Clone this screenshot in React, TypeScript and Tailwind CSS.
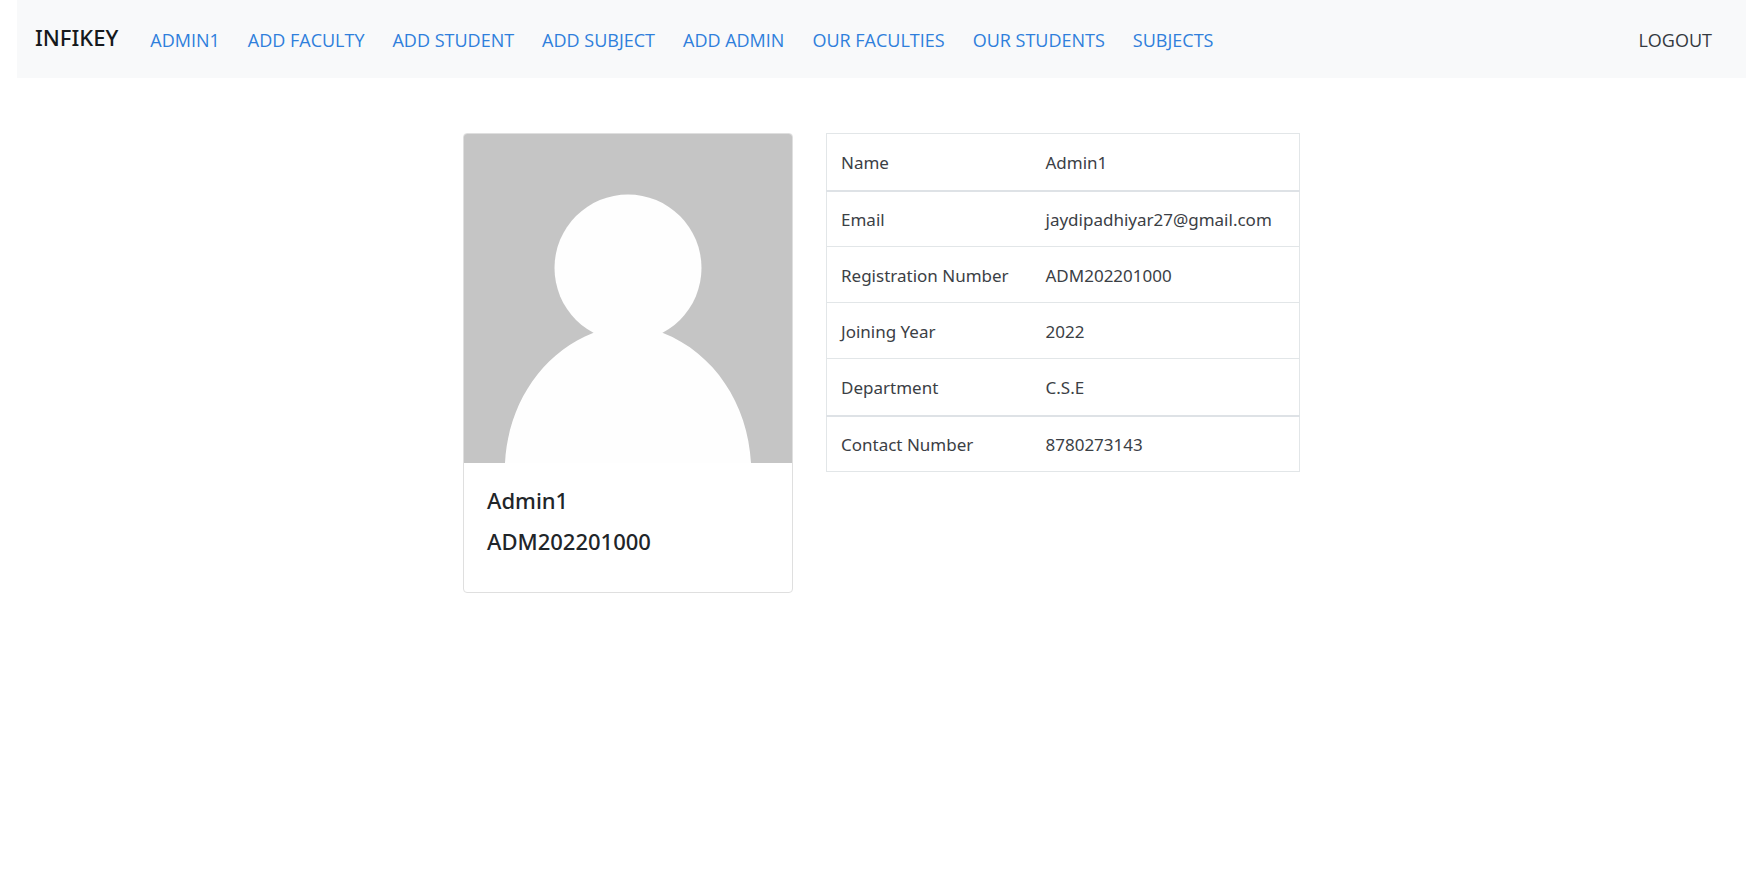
const links = [
  "ADMIN1",
  "ADD FACULTY",
  "ADD STUDENT",
  "ADD SUBJECT",
  "ADD ADMIN",
  "OUR FACULTIES",
  "OUR STUDENTS",
  "SUBJECTS",
];

const heavy = "h-[57px] border-b-2 border-[#dee2e6]";
const light = "h-14 border-b border-[#e2e6e8]";

const details = [
  { label: "Name", value: "Admin1", line: heavy },
  { label: "Email", value: "jaydipadhiyar27@gmail.com", line: light },
  { label: "Registration Number", value: "ADM202201000", line: light },
  { label: "Joining Year", value: "2022", line: light },
  { label: "Department", value: "C.S.E", line: heavy },
  { label: "Contact Number", value: "8780273143", line: light },
];

function Navbar() {
  return (
    <nav className="mx-[17px] flex h-[78px] items-center bg-[#f8f9fa] pr-[34px] pl-[18px] font-['Open_Sans',sans-serif] text-lg leading-6">
      <a href="#" className="mr-8 pb-1 font-['Noto_Sans',sans-serif] text-[22px] font-medium text-[#16191c]">
        INFIKEY
      </a>
      <ul className="flex grow gap-7 pt-0.5">
        {links.map((name) => (
          <li key={name}>
            <a href="#" className="whitespace-nowrap text-[#2f7fdc]">
              {name}
            </a>
          </li>
        ))}
      </ul>
      <a href="#" className="pt-0.5 text-[#343a40]">
        LOGOUT
      </a>
    </nav>
  );
}

function Avatar() {
  return (
    <svg viewBox="0 0 328 329" className="block w-full" role="img" aria-label="Profile">
      <rect width="328" height="329" fill="#c5c5c5" />
      <circle cx="164" cy="134" r="73.500" fill="#fefefe" />
      <path
        d="M41 329C44 270 78 219 129 199C149 189 179 189 199 199C250 219 284 270 287 329Z"
        fill="#fefefe"
      />
    </svg>
  );
}

export default function App() {
  return (
    <div className="bg-white font-['Noto_Sans',sans-serif] text-[#212529]">
      <Navbar />
      <main className="flex items-start justify-center gap-[33px] pt-[55px]">
        <section className="w-[330px] overflow-hidden rounded border border-[#dfdfdf]">
          <Avatar />
          <div className="flex flex-col gap-3 px-[23px] pt-[23px] pb-9 text-[22px] leading-[29px] font-medium">
            <h2>Admin1</h2>
            <h2>ADM202201000</h2>
          </div>
        </section>
        <table className="w-[474px] border-collapse border border-[#e2e6e8] text-[17px] leading-6 text-[#3b4045]">
          <tbody>
            {details.map(({ label, value, line }) => (
              <tr key={label} className={line}>
                <th scope="row" className="w-[205px] pt-[3px] pl-[14px] text-left font-normal whitespace-nowrap">
                  {label}
                </th>
                <td className="pt-[3px] pl-[14px]">{value}</td>
              </tr>
            ))}
          </tbody>
        </table>
      </main>
    </div>
  );
}
